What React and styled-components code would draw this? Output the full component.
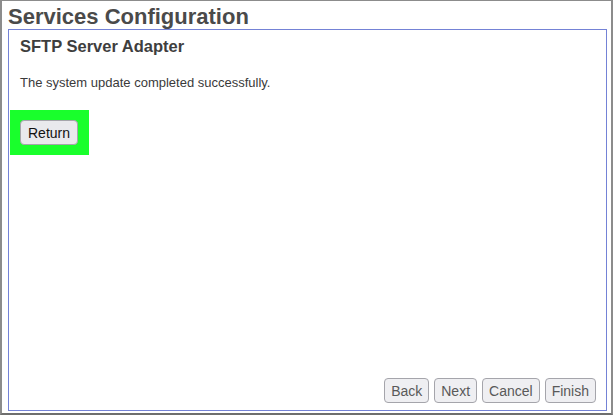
import React from 'react';
import styled, { createGlobalStyle } from 'styled-components';

const GlobalStyle = createGlobalStyle`
  html, body {
    margin: 0;
    padding: 0;
    background: #ffffff;
  }
  body {
    font-family: "Liberation Sans", Arial, sans-serif;
  }
`;

const Frame = styled.div`
  box-sizing: border-box;
  width: 613px;
  height: 415px;
  border-top: 1px solid #8c8c8c;
  border-left: 2px solid #8c8c8c;
  border-right: 2px solid #8c8c8c;
  border-bottom: 2px solid #6e6e6e;
  display: flex;
  flex-direction: column;
  padding: 0 4px 2px 6px;
`;

const Title = styled.h1`
  margin: 0;
  height: 28px;
  line-height: 31px;
  font-size: 22px;
  font-weight: bold;
  color: #4a4a4a;
`;

const Panel = styled.div`
  flex: 1;
  border: 1px solid #7482d6;
  display: flex;
  flex-direction: column;
  padding: 6px 10px 7px 11px;
`;

const Heading = styled.h2`
  margin: 0;
  font-size: 16.5px;
  line-height: 20px;
  font-weight: bold;
  color: #3e3e3e;
`;

const Message = styled.p`
  margin: 19px 0 0;
  font-size: 13px;
  line-height: 15px;
  color: #3a3a3a;
`;

const Highlight = styled.div`
  align-self: flex-start;
  margin: 20px 0 0 -10px;
  padding: 10px 11px 10px 10px;
  background: #19ff2c;
`;

const Button = styled.button`
  font-family: "Liberation Sans", Arial, sans-serif;
  font-size: 14px;
  height: 25px;
  padding: 0 ${p => (p.muted ? 6 : 7)}px;
  border: 1px solid #a5a5ab;
  border-radius: 4px;
  background: ${p => (p.muted ? '#efeff2' : '#e9e9ed')};
  color: ${p => (p.muted ? '#595959' : '#111111')};
`;

const Footer = styled.div`
  margin-top: auto;
  display: flex;
  justify-content: flex-end;
  gap: 5px;
`;

export default function App() {
  return (
    <>
      <GlobalStyle />
      <Frame>
        <Title>Services Configuration</Title>
        <Panel>
          <Heading>SFTP Server Adapter</Heading>
          <Message>The system update completed successfully.</Message>
          <Highlight>
            <Button>Return</Button>
          </Highlight>
          <Footer>
            <Button muted>Back</Button>
            <Button muted>Next</Button>
            <Button muted>Cancel</Button>
            <Button muted>Finish</Button>
          </Footer>
        </Panel>
      </Frame>
    </>
  );
}
